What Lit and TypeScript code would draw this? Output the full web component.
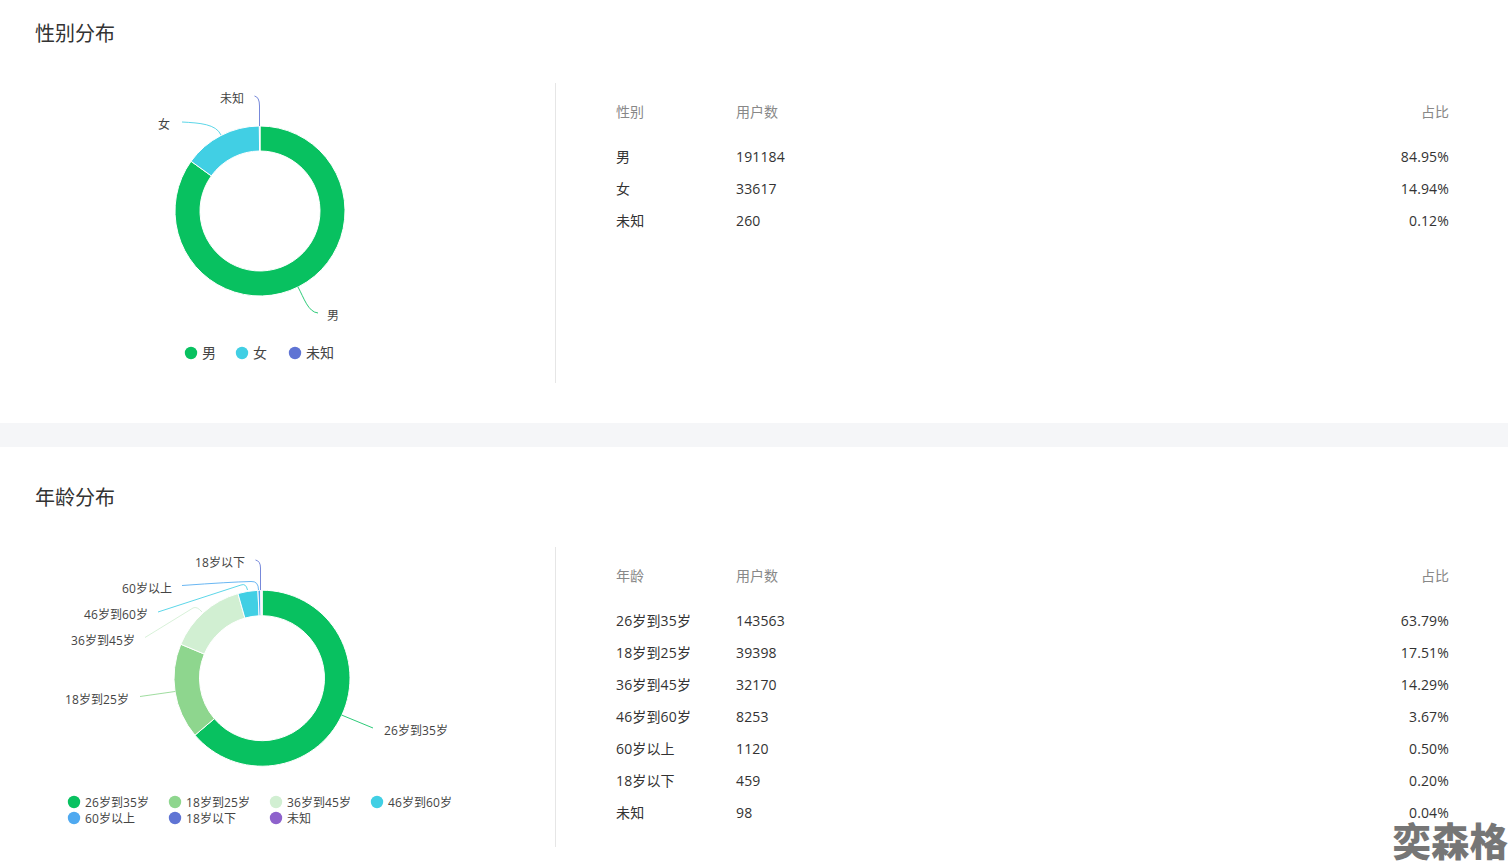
import { LitElement, html, css, svg } from "lit";
import { customElement, property } from "lit/decorators.js";

const C = {
  green: "#08c160",
  cyan: "#41cfe4",
  indigo: "#5f74d4",
  lime: "#8ed68e",
  pale: "#d1efd2",
  sky: "#4fa9f0",
  purple: "#8e62cc",
};

interface Slice { name: string; value: number; color: string; line?: string; lx?: number; ly?: number; }
interface LegendItem { name: string; color: string; x: number; y: number; }
interface Chart { cx: number; cy: number; r0: number; r1: number; slices: Slice[]; legend: LegendItem[]; legendSize: number; legendDy: number; }

function arc(cx: number, cy: number, r0: number, r1: number, a0: number, a1: number) {
  const p = (r: number, a: number) => {
    const t = (a * Math.PI) / 180;
    return `${(cx + r * Math.sin(t)).toFixed(2)} ${(cy - r * Math.cos(t)).toFixed(2)}`;
  };
  const large = a1 - a0 > 180 ? 1 : 0;
  return `M${p(r1, a0)}A${r1} ${r1} 0 ${large} 1 ${p(r1, a1)}L${p(r0, a1)}A${r0} ${r0} 0 ${large} 0 ${p(r0, a0)}Z`;
}

@customElement("donut-chart")
class DonutChart extends LitElement {
  static styles = css`
    :host { display: block; width: 555px; height: 300px; }
    svg { display: block; }
    text { font-family: "Open Sans", "Noto Sans CJK SC", sans-serif; fill: #444; letter-spacing: 0.1px; }
    .label { font-size: 12px; }
  `;
  @property({ attribute: false }) chart!: Chart;
  @property({ type: Number }) top = 0;

  render() {
    const c = this.chart;
    const total = c.slices.reduce((s, x) => s + x.value, 0);
    let a = 0;
    const t = this.top;
    return html`<svg width="555" height="300" viewBox="0 ${t} 555 300">
      ${c.slices.map((s) => {
        const a0 = a;
        a += (s.value / total) * 360;
        return svg`<path d=${arc(c.cx, c.cy, c.r0, c.r1, a0, a)} fill=${s.color} stroke="#fff" stroke-width="1"></path>`;
      })}
      ${c.slices.map((s) =>
        s.line
          ? svg`<path d=${s.line} fill="none" stroke=${s.color} stroke-width="1" stroke-opacity="0.85"></path>
                <text class="label" x=${s.lx!} y=${s.ly!} dominant-baseline="central">${s.name}</text>`
          : null,
      )}
      ${c.legend.map(
        (l) => svg`<circle cx=${l.x} cy=${l.y} r="6.2" fill=${l.color}></circle>
          <text x=${l.x + 11} y=${l.y + c.legendDy} font-size=${c.legendSize} dominant-baseline="central">${l.name}</text>`,
      )}
    </svg>`;
  }
}

const gender: Chart = {
  cx: 260, cy: 211, r0: 60, r1: 85, legendSize: 14, legendDy: -1,
  slices: [
    { name: "男", value: 84.95, color: C.green, line: "M298 287C304 298 308 312 318 313", lx: 327, ly: 315 },
    { name: "女", value: 14.94, color: C.cyan, line: "M182 122C200 123 216 124 221 135", lx: 158, ly: 124 },
    { name: "未知", value: 0.12, color: C.indigo, line: "M254.5 96Q259.5 97 259.5 106L259.5 126", lx: 220, ly: 98 },
  ],
  legend: [
    { name: "男", color: C.green, x: 191, y: 353 },
    { name: "女", color: C.cyan, x: 242, y: 353 },
    { name: "未知", color: C.indigo, x: 295, y: 353 },
  ],
};

const age: Chart = {
  cx: 262, cy: 678.2, r0: 62.5, r1: 88, legendSize: 12, legendDy: 0,
  slices: [
    { name: "26岁到35岁", value: 63.79, color: C.green, line: "M341.5 715L373 728", lx: 384, ly: 730 },
    { name: "18岁到25岁", value: 17.51, color: C.lime, line: "M140 696.5L175 691.5", lx: 65, ly: 699 },
    { name: "36岁到45岁", value: 14.29, color: C.pale, line: "M145 637.5L193 608Q197 606 202 612", lx: 71, ly: 640 },
    { name: "46岁到60岁", value: 3.67, color: C.cyan, line: "M158 612L241 585Q246 583 247.5 590", lx: 84, ly: 614 },
    { name: "60岁以上", value: 0.5, color: C.sky, line: "M182 585.5Q230 582 251 581.5Q258.5 581 258.5 590", lx: 122, ly: 588 },
    { name: "18岁以下", value: 0.2, color: C.indigo, line: "M255.5 560Q260.5 561 260.5 568L260.5 590", lx: 195, ly: 562 },
    { name: "未知", value: 0.04, color: C.purple },
  ],
  legend: [
    { name: "26岁到35岁", color: C.green, x: 74, y: 802 },
    { name: "18岁到25岁", color: C.lime, x: 175, y: 802 },
    { name: "36岁到45岁", color: C.pale, x: 276, y: 802 },
    { name: "46岁到60岁", color: C.cyan, x: 377, y: 802 },
    { name: "60岁以上", color: C.sky, x: 74, y: 818 },
    { name: "18岁以下", color: C.indigo, x: 175, y: 818 },
    { name: "未知", color: C.purple, x: 276, y: 818 },
  ],
};

const genderRows = [["男", "191184", "84.95%"], ["女", "33617", "14.94%"], ["未知", "260", "0.12%"]];
const ageRows = [
  ["26岁到35岁", "143563", "63.79%"],
  ["18岁到25岁", "39398", "17.51%"],
  ["36岁到45岁", "32170", "14.29%"],
  ["46岁到60岁", "8253", "3.67%"],
  ["60岁以上", "1120", "0.50%"],
  ["18岁以下", "459", "0.20%"],
  ["未知", "98", "0.04%"],
];

@customElement("app-root")
class AppRoot extends LitElement {
  static styles = css`
    :host {
      display: block;
      position: relative;
      height: 861px;
      overflow: hidden;
      background: #fff;
      font-family: "Open Sans", "Noto Sans CJK SC", sans-serif;
      color: #333;
    }
    .panel.first { height: 423px; padding-top: 19px; box-sizing: border-box; }
    .panel.second { padding-top: 36px; }
    .divider { height: 24px; background: #f5f6f8; }
    h2 {
      margin: 0 0 34px 35px;
      font-size: 20px;
      line-height: 30px;
      font-weight: 400;
      color: #333;
    }
    .body { display: flex; height: 300px; }
    .chart { width: 555px; border-right: 1px solid #e6e6e6; flex: none; }
    .table { flex: 1; padding: 18px 59px 0 60px; min-width: 0; }
    .row {
      display: grid;
      grid-template-columns: 120px 1fr auto;
      height: 32px;
      align-items: center;
      font-size: 14px;
      line-height: 20px;
      letter-spacing: 0.15px;
    }
    .row.head { color: #888; height: 22px; margin-bottom: 18px; letter-spacing: 0; }
    .watermark {
      position: absolute;
      right: 0;
      bottom: 1px;
      font-size: 38.5px;
      line-height: 38px;
      height: 38px;
      font-weight: 900;
      color: #767676;
      white-space: nowrap;
    }
  `;

  private table(head: string, rows: string[][]) {
    return html`<div class="table">
      <div class="row head"><span>${head}</span><span>用户数</span><span>占比</span></div>
      ${rows.map((r) => html`<div class="row"><span>${r[0]}</span><span>${r[1]}</span><span>${r[2]}</span></div>`)}
    </div>`;
  }

  render() {
    return html`
      <section class="panel first">
        <h2>性别分布</h2>
        <div class="body">
          <div class="chart"><donut-chart .chart=${gender} .top=${83}></donut-chart></div>
          ${this.table("性别", genderRows)}
        </div>
      </section>
      <div class="divider"></div>
      <section class="panel second">
        <h2>年龄分布</h2>
        <div class="body">
          <div class="chart"><donut-chart .chart=${age} .top=${547}></donut-chart></div>
          ${this.table("年龄", ageRows)}
        </div>
      </section>
      <div class="watermark">奕森格</div>
    `;
  }
}
